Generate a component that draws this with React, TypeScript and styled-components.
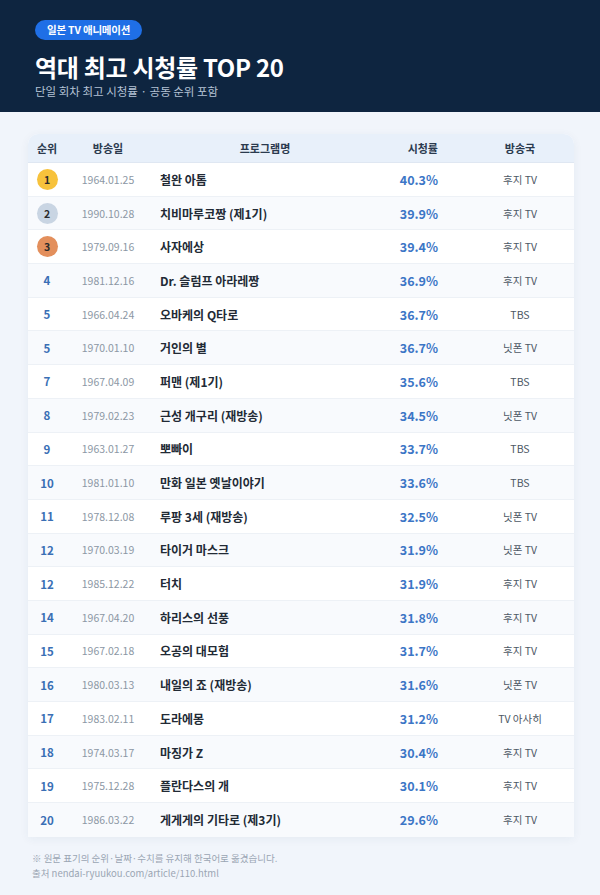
import React from "react";
import styled, { createGlobalStyle } from "styled-components";

const Global = createGlobalStyle`
  html, body { margin: 0; padding: 0; }
  body {
    background: #f1f5fb;
    font-family: "Noto Sans CJK KR", "Noto Sans", sans-serif;
    width: 600px;
  }
`;

type Row = { rank: number; date: string; name: string; rate: string; station: string };

const rows: Row[] = [
  { rank: 1, date: "1964.01.25", name: "철완 아톰", rate: "40.3%", station: "후지 TV" },
  { rank: 2, date: "1990.10.28", name: "치비마루코짱 (제1기)", rate: "39.9%", station: "후지 TV" },
  { rank: 3, date: "1979.09.16", name: "사자에상", rate: "39.4%", station: "후지 TV" },
  { rank: 4, date: "1981.12.16", name: "Dr. 슬럼프 아라레짱", rate: "36.9%", station: "후지 TV" },
  { rank: 5, date: "1966.04.24", name: "오바케의 Q타로", rate: "36.7%", station: "TBS" },
  { rank: 5, date: "1970.01.10", name: "거인의 별", rate: "36.7%", station: "닛폰 TV" },
  { rank: 7, date: "1967.04.09", name: "퍼맨 (제1기)", rate: "35.6%", station: "TBS" },
  { rank: 8, date: "1979.02.23", name: "근성 개구리 (재방송)", rate: "34.5%", station: "닛폰 TV" },
  { rank: 9, date: "1963.01.27", name: "뽀빠이", rate: "33.7%", station: "TBS" },
  { rank: 10, date: "1981.01.10", name: "만화 일본 옛날이야기", rate: "33.6%", station: "TBS" },
  { rank: 11, date: "1978.12.08", name: "루팡 3세 (재방송)", rate: "32.5%", station: "닛폰 TV" },
  { rank: 12, date: "1970.03.19", name: "타이거 마스크", rate: "31.9%", station: "닛폰 TV" },
  { rank: 12, date: "1985.12.22", name: "터치", rate: "31.9%", station: "후지 TV" },
  { rank: 14, date: "1967.04.20", name: "하리스의 선풍", rate: "31.8%", station: "후지 TV" },
  { rank: 15, date: "1967.02.18", name: "오공의 대모험", rate: "31.7%", station: "후지 TV" },
  { rank: 16, date: "1980.03.13", name: "내일의 죠 (재방송)", rate: "31.6%", station: "닛폰 TV" },
  { rank: 17, date: "1983.02.11", name: "도라에몽", rate: "31.2%", station: "TV 아사히" },
  { rank: 18, date: "1974.03.17", name: "마징가 Z", rate: "30.4%", station: "후지 TV" },
  { rank: 19, date: "1975.12.28", name: "플란다스의 개", rate: "30.1%", station: "후지 TV" },
  { rank: 20, date: "1986.03.22", name: "게게게의 기타로 (제3기)", rate: "29.6%", station: "후지 TV" },
];

const Header = styled.header`
  background: #0e2540;
  height: 112px;
  box-sizing: border-box;
  padding: 20px 35px 0;
  display: flex;
  flex-direction: column;
  align-items: flex-start;
`;

const Badge = styled.span`
  background: #1f6fe6;
  color: #fff;
  font-size: 10.5px;
  font-weight: 700;
  height: 20px;
  line-height: 20px;
  padding: 0 12px;
  border-radius: 10px;
  letter-spacing: -0.2px;
`;

const Title = styled.h1`
  margin: 12px 0 0;
  color: #fff;
  font-size: 24px;
  font-weight: 700;
  line-height: 30px;
  letter-spacing: -0.3px;
`;

const Subtitle = styled.p`
  margin: 1px 0 0;
  color: #b4c2d4;
  font-size: 11.5px;
  line-height: 16px;
`;

const Main = styled.main`
  padding: 22px 26px 0 28px;
`;

const Table = styled.div`
  background: #fff;
  border-radius: 10px 10px 0 0;
  box-shadow: 0 2px 10px rgba(30, 60, 110, 0.06);
  overflow: hidden;
`;

const Grid = styled.div<{ $alt?: boolean; $head?: boolean }>`
  display: grid;
  grid-template-columns: 38px 84px 230px 86px 108px;
  align-items: center;
  box-sizing: border-box;
  height: ${(p) => (p.$head ? "29px" : "33.7px")};
  background: ${(p) => (p.$head ? "#e8f0fa" : p.$alt ? "#f8fafd" : "#fff")};
  border-bottom: 1px solid ${(p) => (p.$head ? "#dfe7f2" : "#edf1f6")};
  &:last-child { border-bottom: none; }
`;

const HeadCell = styled.div<{ $align?: string }>`
  font-size: 11px;
  font-weight: 700;
  color: #2b3a4e;
  text-align: ${(p) => p.$align || "center"};
  padding-right: ${(p) => (p.$align === "right" ? "28px" : "0")};
`;

const RankCell = styled.div`
  display: flex;
  justify-content: center;
  align-items: center;
`;

const Medal = styled.span<{ $bg: string }>`
  width: 21px;
  height: 21px;
  border-radius: 50%;
  background: ${(p) => p.$bg};
  display: flex;
  align-items: center;
  justify-content: center;
  font-size: 10.5px;
  font-weight: 700;
  color: #2b2b2b;
`;

const RankNum = styled.span`
  font-size: 11.5px;
  font-weight: 700;
  color: #3a6fb5;
`;

const DateCell = styled.div`
  text-align: center;
  font-size: 10.5px;
  color: #8c97a4;
`;

const NameCell = styled.div`
  padding-left: 10px;
  font-size: 12px;
  font-weight: 700;
  color: #222a35;
  white-space: nowrap;
`;

const RateCell = styled.div`
  text-align: right;
  padding-right: 28px;
  font-size: 12.5px;
  font-weight: 700;
  color: #3c76c6;
`;

const StationCell = styled.div`
  text-align: center;
  font-size: 10.5px;
  color: #4d5865;
`;

const Footer = styled.footer`
  padding: 14px 0 0 32px;
  font-size: 9.5px;
  color: #9aa5b3;
  line-height: 15px;
`;

const medalColor: Record<number, string> = { 1: "#f7c23c", 2: "#c9d5e3", 3: "#e38f5c" };

export default function App() {
  return (
    <>
      <Global />
      <Header>
        <Badge>일본 TV 애니메이션</Badge>
        <Title>역대 최고 시청률 TOP 20</Title>
        <Subtitle>단일 회차 최고 시청률 · 공동 순위 포함</Subtitle>
      </Header>
      <Main>
        <Table>
          <Grid $head>
            <HeadCell>순위</HeadCell>
            <HeadCell>방송일</HeadCell>
            <HeadCell>프로그램명</HeadCell>
            <HeadCell $align="right">시청률</HeadCell>
            <HeadCell>방송국</HeadCell>
          </Grid>
          {rows.map((r, i) => (
            <Grid key={i} $alt={i % 2 === 1}>
              <RankCell>
                {i < 3 ? <Medal $bg={medalColor[r.rank]}>{r.rank}</Medal> : <RankNum>{r.rank}</RankNum>}
              </RankCell>
              <DateCell>{r.date}</DateCell>
              <NameCell>{r.name}</NameCell>
              <RateCell>{r.rate}</RateCell>
              <StationCell>{r.station}</StationCell>
            </Grid>
          ))}
        </Table>
      </Main>
      <Footer>
        <div>※ 원문 표기의 순위·날짜·수치를 유지해 한국어로 옮겼습니다.</div>
        <div>출처 nendai-ryuukou.com/article/110.html</div>
      </Footer>
    </>
  );
}
